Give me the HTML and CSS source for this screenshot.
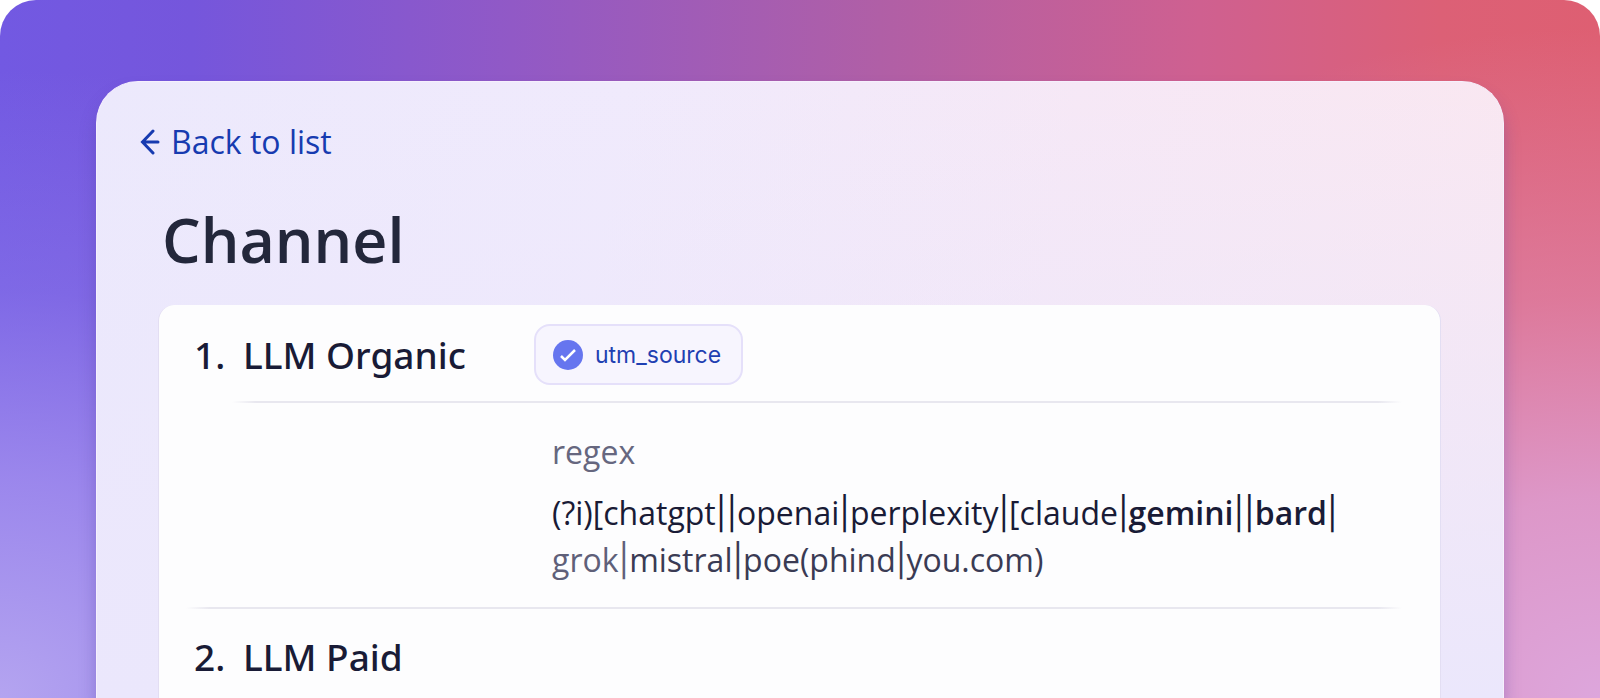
FILE: index.html
```html
<!DOCTYPE html>
<html lang="en">
<head>
<meta charset="utf-8">
<meta name="viewport" content="width=device-width, initial-scale=1">
<title>Channel</title>
<link rel="stylesheet" href="styles.css">
</head>
<body>
<div class="page">
  <main class="panel">
    <a class="back" href="#">
      <svg class="back-icon" viewBox="0 0 20 26" aria-hidden="true"><path d="M13 2 2.500 13 13 24M3 13h15"/></svg>
      <span>Back to list</span>
    </a>
    <h1 class="title">Channel</h1>
    <section class="card">
      <div class="rule-head">
        <span class="number">1.</span>
        <h2 class="name">LLM Organic</h2>
        <button class="chip" type="button">
          <svg class="chip-icon" viewBox="0 0 30 30" aria-hidden="true"><circle cx="15" cy="15" r="15"/><path d="m8 16 4 4 10-10"/></svg>
          <span>utm_source</span>
        </button>
      </div>
      <div class="rule-body">
        <p class="operator">regex</p>
        <p class="pattern">(?i)[chatgpt<span class="bar">||</span>openai<span class="bar">|</span>perplexity<span class="bar">|</span>[claude<span class="bar">|</span><b>gemini<span class="bar">||</span>bard<span class="bar">|</span></b><br><span class="soft">grok<span class="bar">|</span></span><span class="mid">mistral<span class="bar">|</span>poe(phind<span class="bar">|</span>you.com)</span></p>
      </div>
      <div class="rule-head">
        <span class="number">2.</span>
        <h2 class="name">LLM Paid</h2>
      </div>
    </section>
  </main>
</div>
</body>
</html>
```
FILE: styles.css
```css
* {
  box-sizing: border-box;
}

body {
  margin: 0;
  background: #fff;
  color: #191b36;
  font-family: "Open Sans", "Noto Sans", sans-serif;
}

h1, h2, p {
  margin: 0;
}

.page {
  display: flex;
  flex-direction: column;
  min-height: 100vh;
  padding: 81px 6% 0;
  border-radius: 36px 36px 0 0;
  background:
    radial-gradient(ellipse 50% 90% at 0 100%, #b4a4f0 0%, #a592efcc 35%, #9180ec66 65%, #7459e000 100%),
    radial-gradient(ellipse 50% 96% at 100% 100%, #dda6dc 0%, #dd9fd4e0 30%, #dd8fbc88 60%, #de5f7200 100%),
    linear-gradient(to right, #7259e2 0%, #7556dc 12%, #9159c6 32%, #b05fa6 55%, #cf6090 75%, #dc6076 90%, #de5f72 100%);
  overflow: hidden;
}

.panel {
  display: flex;
  flex: 1;
  flex-direction: column;
  align-items: flex-start;
  padding: 32px 62px 0 43px;
  border: solid #f6f0fd;
  border-width: 1px 1px 0;
  border-radius: 42px 42px 0 0;
  background:
    linear-gradient(to bottom, #f3e8fa00 0, #ebe7fc 100%),
    linear-gradient(100deg, #ece9fc 0%, #f0eafc 35%, #f6e8f6 65%, #fae7f0 100%);
  box-shadow: 0 12px 16px #503ca059;
}

.back {
  display: flex;
  align-items: center;
  gap: 11px;
  color: #173bb0;
  font-size: 32px;
  line-height: 56px;
  text-decoration: none;
}

.back-icon {
  width: 20px;
  height: 26px;
  fill: none;
  stroke: currentColor;
  stroke-width: 3;
  stroke-linecap: round;
}

.title {
  margin: 22px 0 18px;
  padding-left: 22px;
  color: #23273b;
  font-size: 61px;
  font-weight: 600;
  line-height: 95px;
}

.card {
  flex: 1;
  align-self: stretch;
  margin-left: 18px;
  padding: 0 38px 0 27px;
  border: solid #e3def3;
  border-width: 0 1px;
  border-radius: 16px 16px 0 0;
  background: #fdfdfe;
}

.rule-head {
  display: grid;
  grid-template-columns: 49px 291px auto;
  align-items: center;
  justify-content: start;
  padding: 19px 0 0 8px;
}

.number, .name {
  font-family: "Noto Sans", sans-serif;
  font-size: 37px;
  font-weight: 500;
  line-height: 58px;
}

.chip {
  display: flex;
  align-items: center;
  gap: 12px;
  height: 61px;
  padding: 0 20px 0 17px;
  border: 2px solid #e5e0fa;
  border-radius: 16px;
  background: #f7f5fe;
  color: #1f3fb2;
  font: 400 23px Inter, sans-serif;
}

.chip-icon {
  width: 30px;
  height: 30px;
  fill: #6675ef;
}

.chip-icon path {
  fill: none;
  stroke: #fff;
  stroke-width: 2.500;
}

.rule-body {
  margin-top: 16px;
  padding: 25px 0 25px 366px;
  background:
    linear-gradient(to right, transparent, #e8e7ef 24px, #e8e7ef calc(100% - 24px), transparent) right top / calc(100% - 46px) 2px no-repeat,
    linear-gradient(to right, transparent, #e8e7ef 24px, #e8e7ef calc(100% - 24px), transparent) left bottom / 100% 2px no-repeat;
}

.operator {
  margin-bottom: 12px;
  color: #66677f;
  font-size: 32px;
  line-height: 52px;
}

.pattern {
  font-size: 32px;
  line-height: 46px;
}

.pattern b {
  font-weight: 600;
}

.bar {
  font-family: Inter, sans-serif;
  font-weight: 400;
}

.soft {
  color: #5f6079;
}

.mid {
  color: #3a3b54;
}
```
